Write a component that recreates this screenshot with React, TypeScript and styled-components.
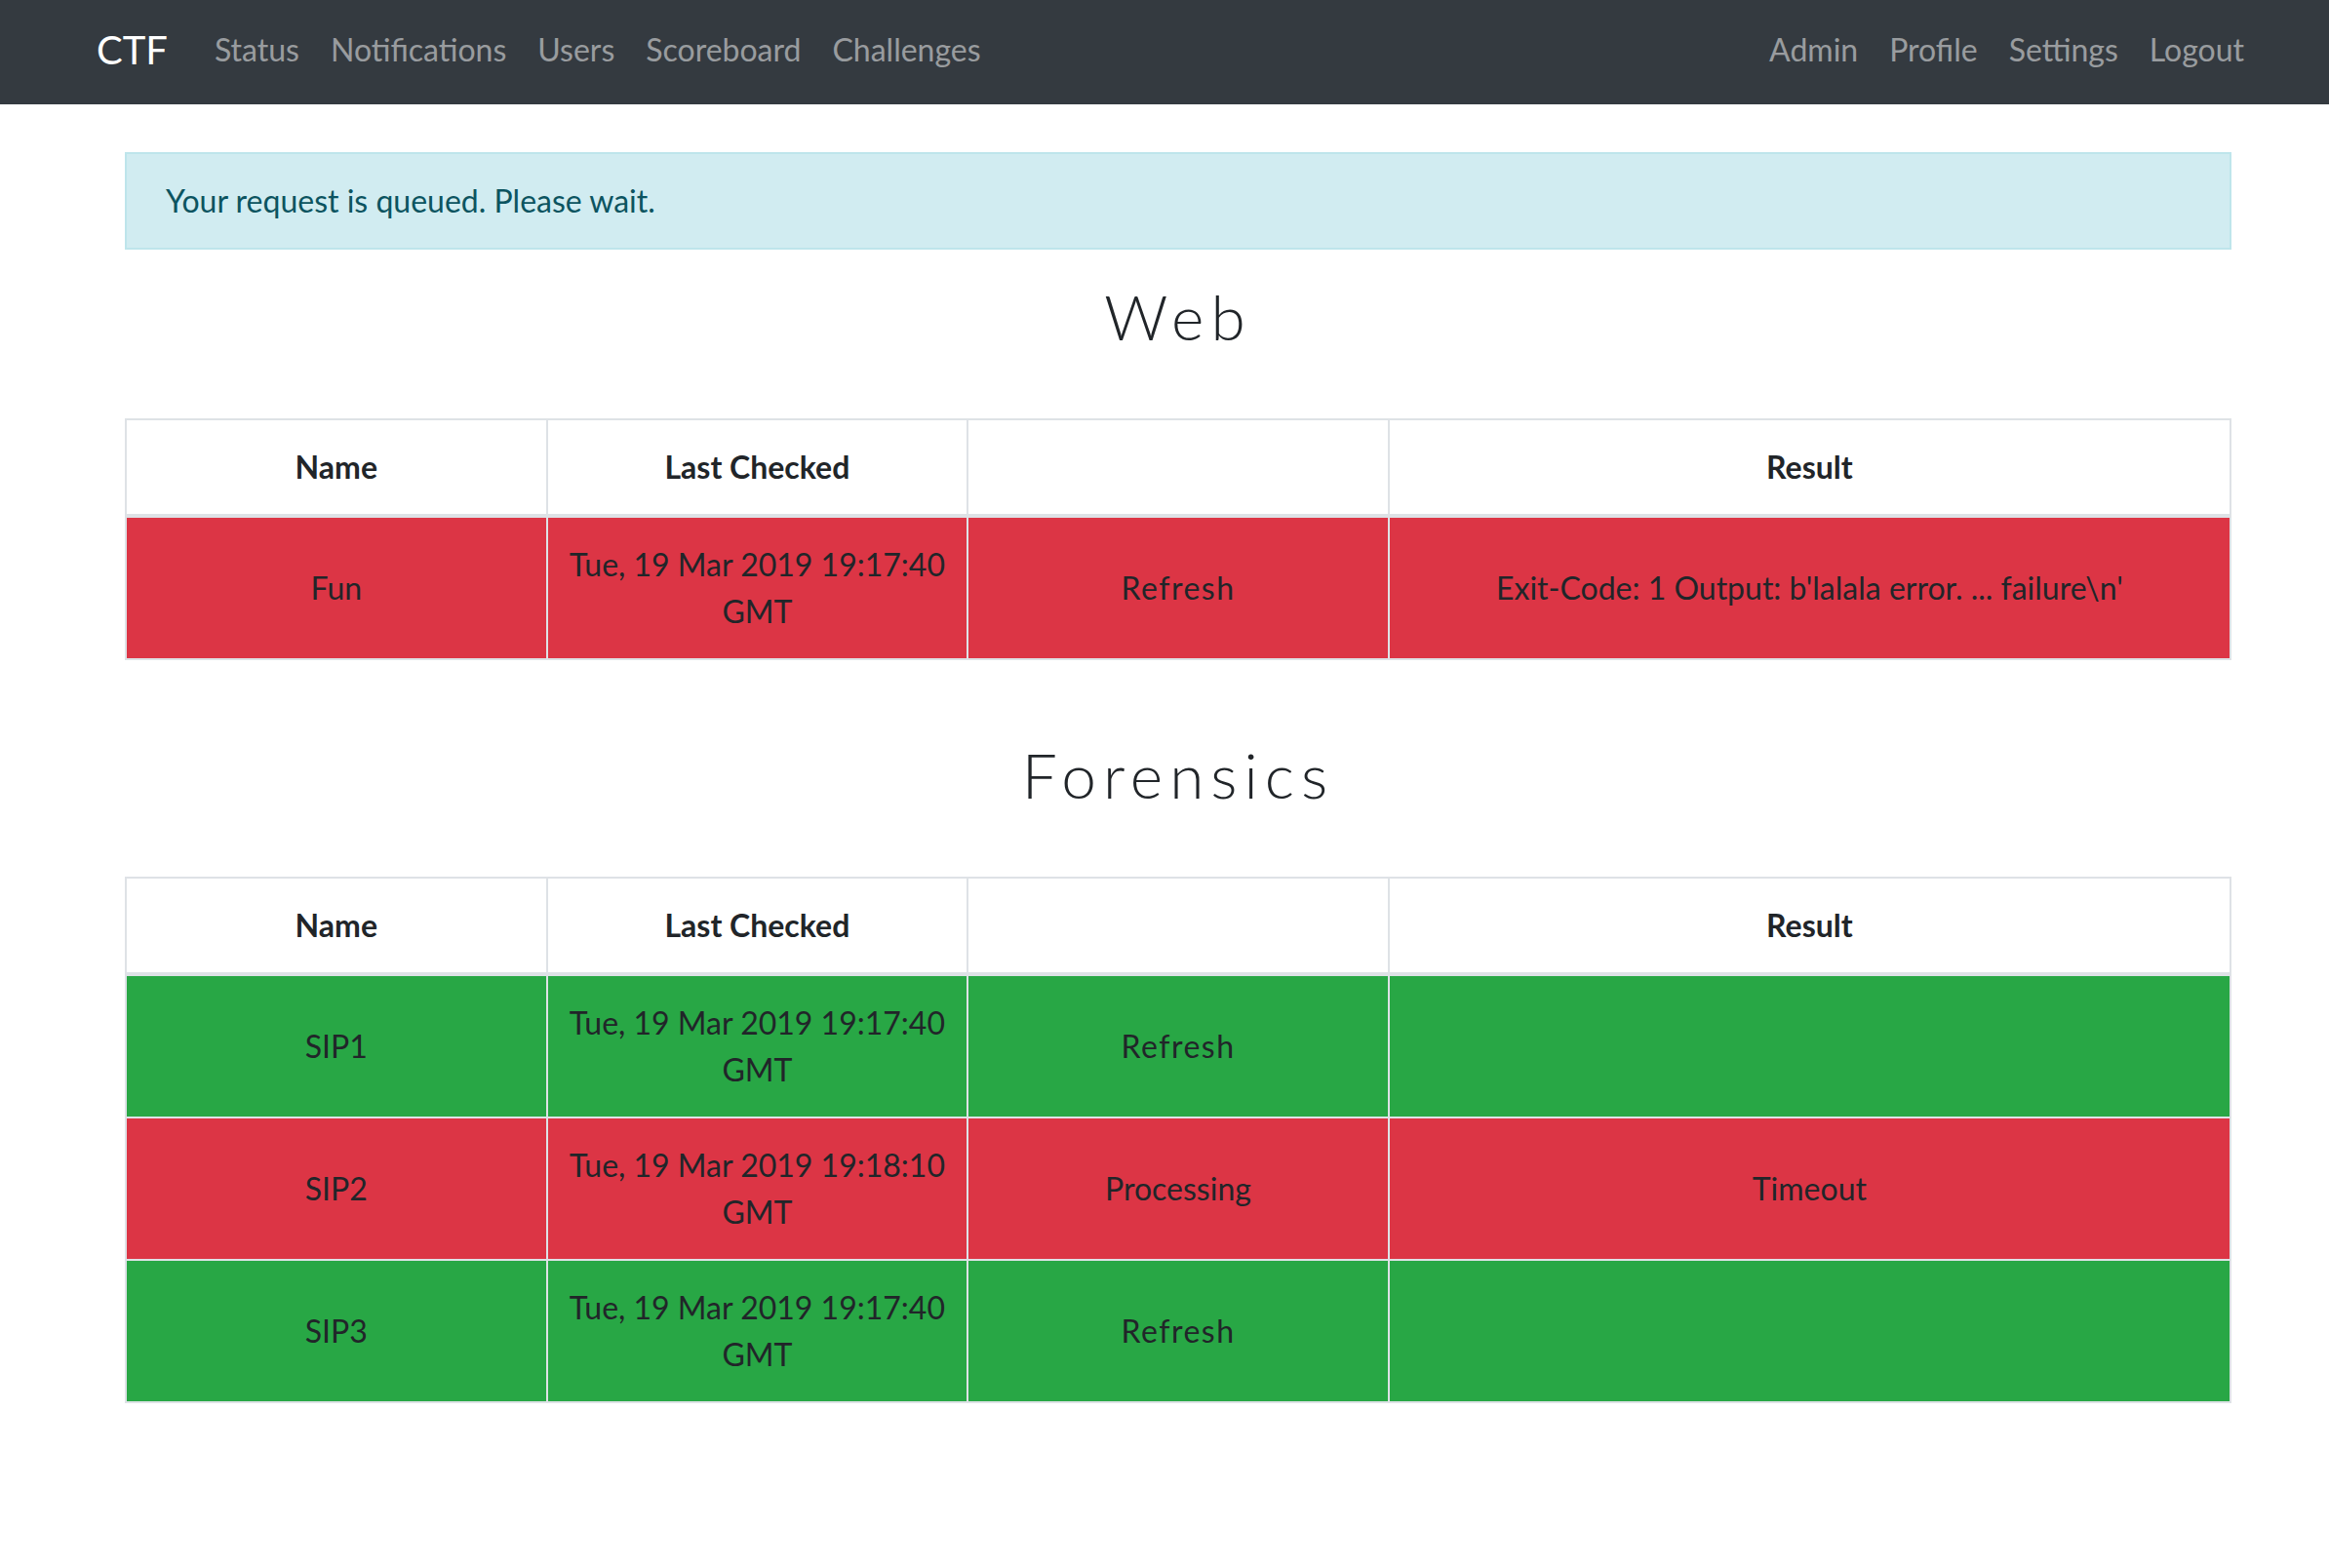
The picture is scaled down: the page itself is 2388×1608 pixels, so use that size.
import React from 'react';
import styled, { createGlobalStyle } from 'styled-components';

type Status = 'danger' | 'success';

interface Check {
  name: string;
  checked: string;
  action: string;
  result: string;
  status: Status;
}

interface Category {
  title: string;
  checks: Check[];
}

const categories: Category[] = [
  {
    title: 'Web',
    checks: [
      {
        name: 'Fun',
        checked: 'Tue, 19 Mar 2019 19:17:40 GMT',
        action: 'Refresh',
        result: "Exit-Code: 1 Output: b'lalala error. ... failure\\n'",
        status: 'danger',
      },
    ],
  },
  {
    title: 'Forensics',
    checks: [
      { name: 'SIP1', checked: 'Tue, 19 Mar 2019 19:17:40 GMT', action: 'Refresh', result: '', status: 'success' },
      { name: 'SIP2', checked: 'Tue, 19 Mar 2019 19:18:10 GMT', action: 'Processing', result: 'Timeout', status: 'danger' },
      { name: 'SIP3', checked: 'Tue, 19 Mar 2019 19:17:40 GMT', action: 'Refresh', result: '', status: 'success' },
    ],
  },
];

const leftLinks = ['Status', 'Notifications', 'Users', 'Scoreboard', 'Challenges'];
const rightLinks = ['Admin', 'Profile', 'Settings', 'Logout'];

const GlobalStyle = createGlobalStyle`
  body {
    margin: 0;
    background: #fff;
    color: #212529;
    font-family: Lato, "Liberation Sans", sans-serif;
    font-size: 32px;
    line-height: 48px;
  }
`;

const Navbar = styled.nav`
  display: flex;
  align-items: center;
  height: 107px;
  padding: 0 71px 6px 99px;
  background: #343a40;
  box-sizing: border-box;
`;

const Brand = styled.a`
  margin-right: 32px;
  color: #fff;
  font-size: 40px;
  line-height: 60px;
  text-decoration: none;
`;

const NavList = styled.div<{ $right?: boolean }>`
  display: flex;
  margin-left: ${(p) => (p.$right ? 'auto' : '0')};
`;

const NavLink = styled.a`
  padding: 0 16px;
  color: rgba(255, 255, 255, 0.5);
  text-decoration: none;
  cursor: pointer;

  &:hover {
    color: rgba(255, 255, 255, 0.75);
  }
`;

const Container = styled.main`
  margin: 49px 100px 0 128px;
`;

const Alert = styled.div`
  margin-bottom: 31px;
  padding: 24px 40px;
  background: #d1ecf1;
  border: 2px solid #bee5eb;
  color: #0c5460;
`;

const Heading = styled.h2`
  margin: 0 0 65px;
  font-family: Lato, "Liberation Sans", sans-serif;
  font-size: 64px;
  font-weight: 300;
  line-height: 1.2;
  letter-spacing: 7px;
  text-align: center;
`;

const Table = styled.table`
  width: 100%;
  margin-bottom: 80px;
  border-collapse: collapse;
  table-layout: fixed;
  border: 2px solid #dee2e6;
`;

const HeadCell = styled.th`
  padding: 24px 16px;
  border: 2px solid #dee2e6;
  border-bottom-width: 4px;
  font-weight: 700;
  text-align: center;
  vertical-align: middle;
`;

const Cell = styled.td<{ $status: Status }>`
  padding: 24px 16px;
  border: 2px solid #dee2e6;
  background: ${(p) => (p.$status === 'danger' ? '#dc3545' : '#28a745')};
  text-align: center;
  vertical-align: middle;
`;

const RefreshButton = styled.span`
  letter-spacing: 1.5px;
  cursor: pointer;
`;

const CheckTable: React.FC<{ checks: Check[] }> = ({ checks }) => (
  <Table>
    <colgroup>
      <col style={{ width: '20%' }} />
      <col style={{ width: '20%' }} />
      <col style={{ width: '20%' }} />
      <col style={{ width: '40%' }} />
    </colgroup>
    <thead>
      <tr>
        <HeadCell>Name</HeadCell>
        <HeadCell>Last Checked</HeadCell>
        <HeadCell />
        <HeadCell>Result</HeadCell>
      </tr>
    </thead>
    <tbody>
      {checks.map((c) => (
        <tr key={c.name}>
          <Cell $status={c.status}>{c.name}</Cell>
          <Cell $status={c.status}>{c.checked}</Cell>
          <Cell $status={c.status}>
            {c.action === 'Refresh' ? <RefreshButton>Refresh</RefreshButton> : c.action}
          </Cell>
          <Cell $status={c.status}>{c.result}</Cell>
        </tr>
      ))}
    </tbody>
  </Table>
);

export default function App() {
  return (
    <>
      <GlobalStyle />
      <Navbar>
        <Brand>CTF</Brand>
        <NavList>
          {leftLinks.map((l) => (
            <NavLink key={l}>{l}</NavLink>
          ))}
        </NavList>
        <NavList $right>
          {rightLinks.map((l) => (
            <NavLink key={l}>{l}</NavLink>
          ))}
        </NavList>
      </Navbar>
      <Container>
        <Alert>Your request is queued. Please wait.</Alert>
        {categories.map((cat) => (
          <section key={cat.title}>
            <Heading>{cat.title}</Heading>
            <CheckTable checks={cat.checks} />
          </section>
        ))}
      </Container>
    </>
  );
}
